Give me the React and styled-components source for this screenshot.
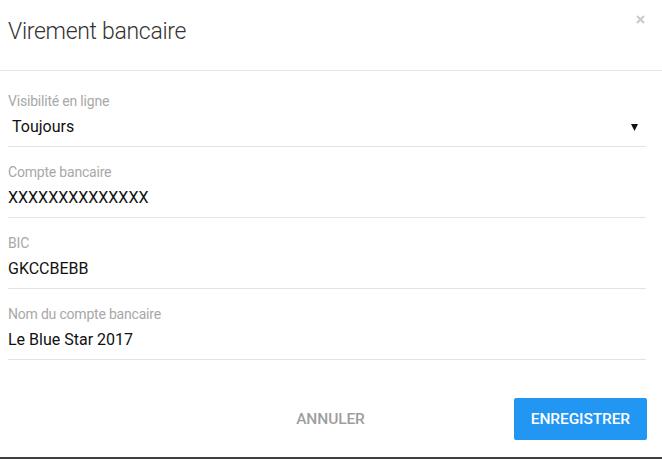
import React from 'react'
import styled, { createGlobalStyle } from 'styled-components'

const GlobalStyle = createGlobalStyle`
  html, body {
    margin: 0;
    padding: 0;
    background: #fff;
  }
  body {
    font-family: Roboto, "Liberation Sans", Arial, sans-serif;
    width: 662px;
    height: 459px;
    overflow: hidden;
  }
`

const Dialog = styled.div`
  width: 662px;
  height: 457px;
  display: flex;
  flex-direction: column;
  background: #fff;
  border-bottom: 2px solid #3f3f3f;
`

const Header = styled.div`
  display: flex;
  justify-content: space-between;
  align-items: flex-start;
  padding: 18px 16px 24px 8px;
  border-bottom: 1px solid #e3e3e3;
`

const Title = styled.h2`
  margin: 0;
  font-size: 23px;
  line-height: 28px;
  font-weight: 300;
  letter-spacing: -0.3px;
  color: #333;
`

const CloseButton = styled.button`
  border: 0;
  background: none;
  padding: 0;
  margin: -3px 1px 0 0;
  width: 9px;
  height: 9px;
  display: flex;
  cursor: pointer;
`

const Form = styled.div`
  padding: 5px 16px 0 8px;
  display: flex;
  flex-direction: column;
`

const Field = styled.div`
  padding: 17px 0 9px;
  border-bottom: 1px solid #e3e3e3;
  display: flex;
  flex-direction: column;
  gap: 8px;
`

const Label = styled.label`
  font-size: 14px;
  line-height: 16px;
  letter-spacing: -0.2px;
  color: #a8a8a8;
`

const Value = styled.div`
  display: flex;
  align-items: center;
  justify-content: space-between;
  font-size: 16px;
  line-height: 20px;
  color: #111;
  padding-left: ${props => (props.$select ? '4px' : '0')};
`

const Footer = styled.div`
  display: flex;
  justify-content: flex-end;
  align-items: center;
  gap: 132px;
  padding: 38px 15px 0 8px;
`

const Button = styled.button`
  height: 42px;
  padding: 0 17px;
  border: 0;
  border-radius: 2px;
  font-family: inherit;
  font-size: 15.5px;
  font-weight: 500;
  letter-spacing: -0.1px;
  text-transform: uppercase;
  cursor: pointer;
  background: ${props => (props.$primary ? '#2196f3' : 'transparent')};
  color: ${props => (props.$primary ? '#fff' : '#9e9e9e')};
`

const fields = [
  { label: 'Compte bancaire', value: 'XXXXXXXXXXXXXX' },
  { label: 'BIC', value: 'GKCCBEBB' },
  { label: 'Nom du compte bancaire', value: 'Le Blue Star 2017' },
]

export default function App() {
  return (
    <>
      <GlobalStyle />
      <Dialog>
        <Header>
          <Title>Virement bancaire</Title>
          <CloseButton aria-label="Fermer">
            <svg width="9" height="9" viewBox="0 0 9 9">
              <path d="M1 1L8 8M8 1L1 8" stroke="#c9c9c9" strokeWidth="2" />
            </svg>
          </CloseButton>
        </Header>
        <Form>
          <Field>
            <Label>Visibilité en ligne</Label>
            <Value $select>
              Toujours
              <svg width="7" height="7" viewBox="0 0 7 7" style={{ marginRight: 8 }}>
                <path d="M0 0H7L3.5 7Z" fill="#111" />
              </svg>
            </Value>
          </Field>
          {fields.map(f => (
            <Field key={f.label}>
              <Label>{f.label}</Label>
              <Value>{f.value}</Value>
            </Field>
          ))}
        </Form>
        <Footer>
          <Button>Annuler</Button>
          <Button $primary>Enregistrer</Button>
        </Footer>
      </Dialog>
    </>
  )
}
